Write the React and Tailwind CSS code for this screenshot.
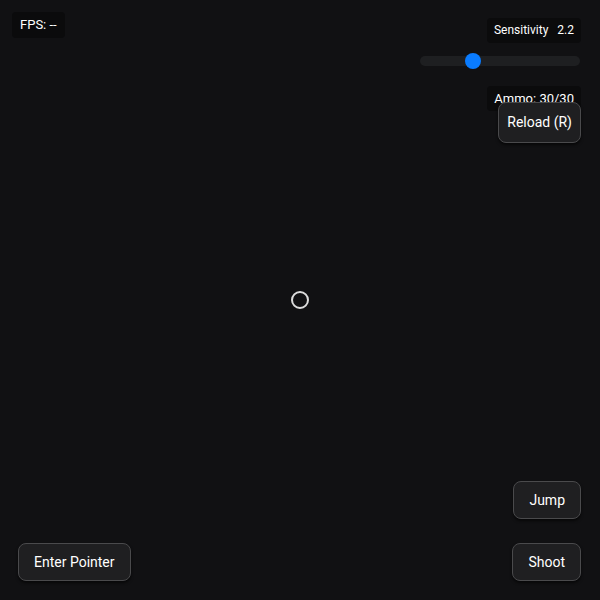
import { useState } from "react";

const btn =
  "rounded-lg border border-[#4a4a4c] bg-[#1f1f21] text-white leading-5 shadow-[0_2px_3px_rgba(0,0,0,0.6)]";

export default function App() {
  const [sens] = useState(2.2);
  const pct = ((sens - 0.5) / (6 - 0.5)) * 100;

  return (
    <div
      className="relative w-[600px] h-[600px] overflow-hidden bg-[#111113] text-white"
      style={{ fontFamily: "Roboto, 'Noto Sans', sans-serif" }}
    >
      {/* FPS */}
      <div className="absolute left-3 top-3 rounded bg-[#0b0b0c] px-2 py-[4px] text-[13px] leading-[18px]">
        FPS: --
      </div>

      {/* top right hud */}
      <div className="absolute right-[19px] top-[18px] flex flex-col items-end">
        <div className="flex gap-[9px] rounded bg-[#0b0b0c] px-[7px] py-[3px] text-[12px] leading-[19px]">
          <span>Sensitivity</span>
          <span>2.2</span>
        </div>

        <div className="relative mt-[13px] mr-[1px] w-[160px] h-[10px] rounded-full bg-[#1e1f21]">
          <div
            className="absolute top-1/2 w-4 h-4 -translate-x-1/2 -translate-y-1/2 rounded-full bg-[#0a7cff]"
            style={{ left: `calc(8px + ${pct / 100} * 144px)` }}
          />
        </div>

        <div className="mt-[20px] rounded bg-[#0b0b0c] px-[7px] py-[3px] text-[13px] leading-[19px]">
          Ammo: 30/30
        </div>

        <button className={`relative -mt-[9px] px-[8px] py-[10px] text-[14px] leading-[19px] ${btn}`}>
          Reload (R)
        </button>
      </div>

      {/* crosshair */}
      <div className="absolute left-1/2 top-1/2 w-[18px] h-[18px] -translate-x-1/2 -translate-y-1/2 rounded-full border-2 border-[#dcdcdc]" />

      {/* bottom controls */}
      <div className="absolute inset-x-[18px] bottom-[19px] flex items-end justify-between pr-[1px]">
        <button className={`px-[15px] py-[8px] text-[14px] ${btn}`}>Enter Pointer</button>
        <div className="flex flex-col items-end gap-[24px]">
          <button className={`px-[15px] py-[8px] text-[14px] ${btn}`}>Jump</button>
          <button className={`px-[15px] py-[8px] text-[14px] ${btn}`}>Shoot</button>
        </div>
      </div>
    </div>
  );
}
